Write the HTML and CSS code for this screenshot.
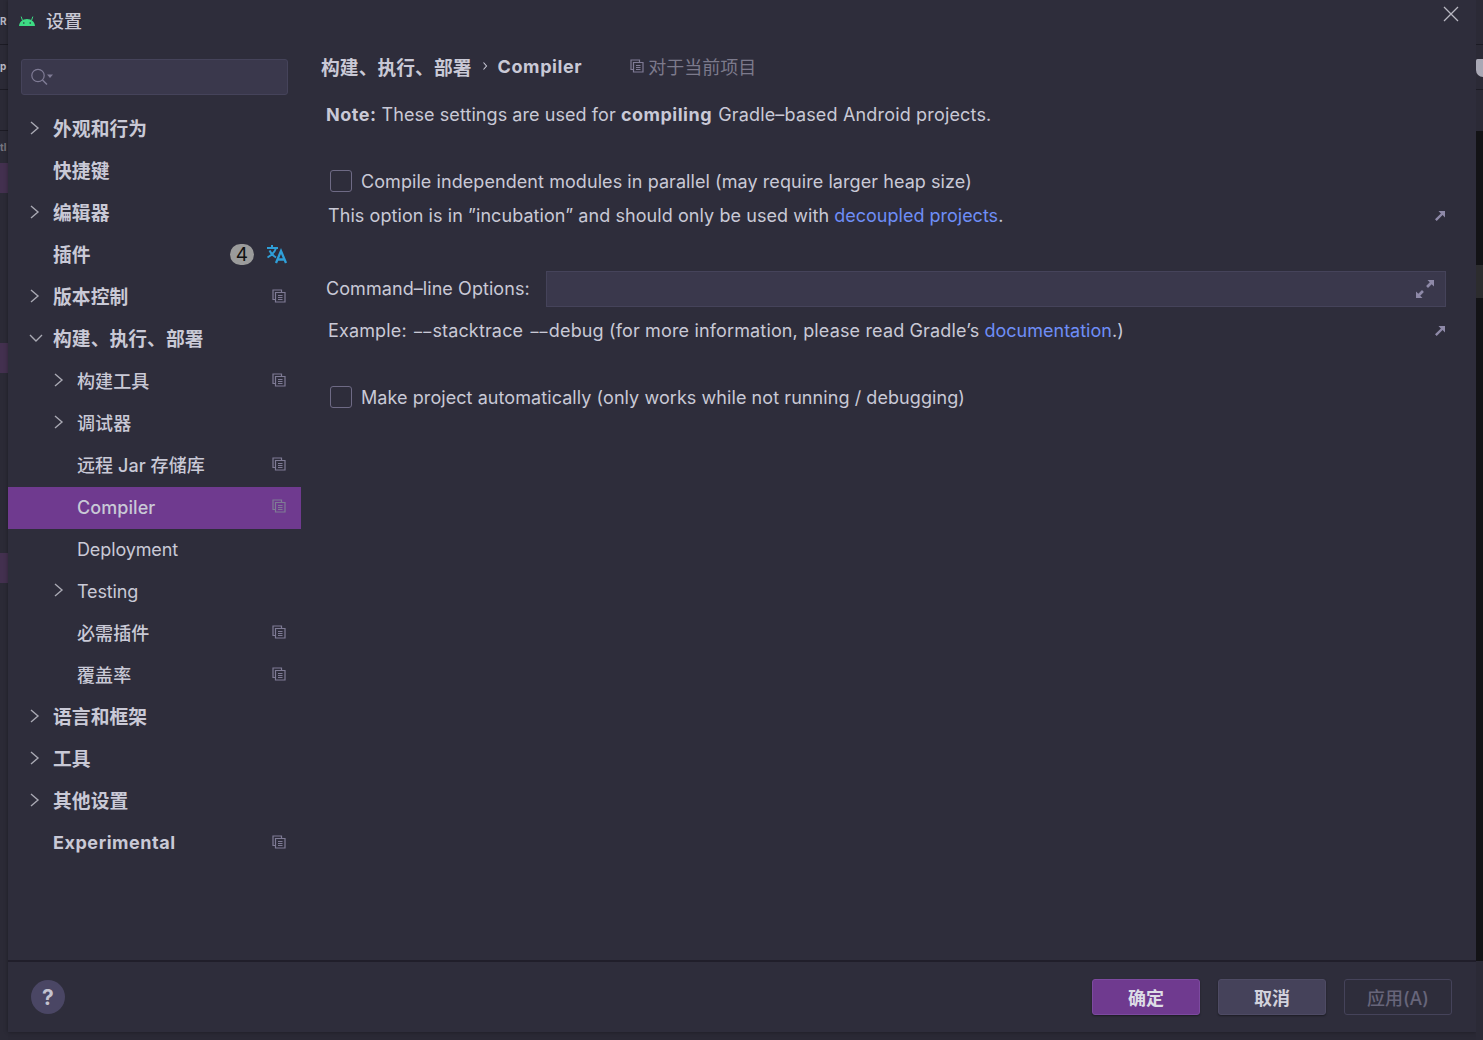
FILE: index.html
```html
<!DOCTYPE html>
<html lang="zh-CN">

<head>
  <meta charset="UTF-8" />
  <title>设置</title>
  <link rel="stylesheet" href="styles.css">
</head>

<body>
  <div class="ide-left">
    <div class="ide-cell h45"><span class="ide-text">R</span></div>
    <div class="ide-cell h45"><span class="ide-text">p</span></div>
    <div class="ide-cell h41"></div>
    <div class="ide-gap h32"><span class="ide-text dim">tl</span></div>
    <div class="ide-mark h30"></div>
    <div class="ide-gap h150"></div>
    <div class="ide-mark h30"></div>
    <div class="ide-gap h180"></div>
    <div class="ide-mark h30"></div>
  </div>

  <div class="dialog">
    <header class="titlebar">
      <svg class="android" width="16" height="10" viewBox="0 0 16 10">
        <path d="M0 10C.3 6 3.4 3 8 3s7.7 3 8 7z" fill="#3ddc84" />
        <path d="M3.5 4.5 2.2.6M12.5 4.5 13.800.6" stroke="#3ddc84" stroke-width="1" />
        <circle cx="4.800" cy="7" r=".8" fill="#2e2d3b" />
        <circle cx="11.200" cy="7" r=".8" fill="#2e2d3b" />
      </svg>
      <span class="title">设置</span>
      <svg class="close" width="16" height="16" viewBox="0 0 16 16">
        <path d="M1 1 15 15M15 1 1 15" stroke="#b9b8c2" stroke-width="1.300" />
      </svg>
    </header>

    <div class="main">
      <aside class="sidebar">
        <div class="search">
          <svg width="24" height="18" viewBox="0 0 24 18">
            <circle cx="8" cy="7.500" r="6.200" fill="none" stroke="#7f7b95" stroke-width="1.200" />
            <path d="M12.500 12 17 16.500" stroke="#7f7b95" stroke-width="1.500" />
            <path d="M17 6.500h6l-3 3.500z" fill="#7f7b95" />
          </svg>
        </div>
        <ul class="tree">
          <li class="row"><svg class="arrow" viewBox="0 0 10 14"><path d="M1 1l7 6-7 6" /></svg><span class="label strong">外观和行为</span></li>
          <li class="row"><span class="label strong">快捷键</span></li>
          <li class="row"><svg class="arrow" viewBox="0 0 10 14"><path d="M1 1l7 6-7 6" /></svg><span class="label strong">编辑器</span></li>
          <li class="row"><span class="label strong">插件</span><span class="badge">4</span>
            <svg class="translate" width="22" height="20" viewBox="0 0 22 20">
              <path d="M1 4h11M6 1v3M10 4C9 8 6 11 1.500 13.500M3.500 6.500C5 9.500 7.500 12 10 13.500" fill="none" stroke="#2f9fd8" stroke-width="2" />
              <path d="M10 19l5-12 5 12M12 15.500h6" fill="none" stroke="#2f9fd8" stroke-width="2.300" />
            </svg>
          </li>
          <li class="row"><svg class="arrow" viewBox="0 0 10 14"><path d="M1 1l7 6-7 6" /></svg><span class="label strong">版本控制</span><svg class="copy" viewBox="0 0 14 14"><path d="M3.500 10.500H1V1h8.500v2.500M3.500 3.500H13V13H3.500zM6 6.500h4.500M6 8.500h4.500M6 10.500h4.500" /></svg></li>
          <li class="row"><svg class="arrow open" viewBox="0 0 14 10"><path d="M1 2l6 6 6-6" /></svg><span class="label strong">构建、执行、部署</span></li>
          <li class="row sub"><svg class="arrow" viewBox="0 0 10 14"><path d="M1 1l7 6-7 6" /></svg><span class="label">构建工具</span><svg class="copy" viewBox="0 0 14 14"><path d="M3.500 10.500H1V1h8.500v2.500M3.500 3.500H13V13H3.500zM6 6.500h4.500M6 8.500h4.500M6 10.500h4.500" /></svg></li>
          <li class="row sub"><svg class="arrow" viewBox="0 0 10 14"><path d="M1 1l7 6-7 6" /></svg><span class="label">调试器</span></li>
          <li class="row sub"><span class="label">远程 Jar 存储库</span><svg class="copy" viewBox="0 0 14 14"><path d="M3.500 10.500H1V1h8.500v2.500M3.500 3.500H13V13H3.500zM6 6.500h4.500M6 8.500h4.500M6 10.500h4.500" /></svg></li>
          <li class="row sub selected"><span class="label latin">Compiler</span><svg class="copy" viewBox="0 0 14 14"><path d="M3.500 10.500H1V1h8.500v2.500M3.500 3.500H13V13H3.500zM6 6.500h4.500M6 8.500h4.500M6 10.500h4.500" /></svg></li>
          <li class="row sub"><span class="label latin">Deployment</span></li>
          <li class="row sub"><svg class="arrow" viewBox="0 0 10 14"><path d="M1 1l7 6-7 6" /></svg><span class="label latin">Testing</span></li>
          <li class="row sub"><span class="label">必需插件</span><svg class="copy" viewBox="0 0 14 14"><path d="M3.500 10.500H1V1h8.500v2.500M3.500 3.500H13V13H3.500zM6 6.500h4.500M6 8.500h4.500M6 10.500h4.500" /></svg></li>
          <li class="row sub"><span class="label">覆盖率</span><svg class="copy" viewBox="0 0 14 14"><path d="M3.500 10.500H1V1h8.500v2.500M3.500 3.500H13V13H3.500zM6 6.500h4.500M6 8.500h4.500M6 10.500h4.500" /></svg></li>
          <li class="row"><svg class="arrow" viewBox="0 0 10 14"><path d="M1 1l7 6-7 6" /></svg><span class="label strong">语言和框架</span></li>
          <li class="row"><svg class="arrow" viewBox="0 0 10 14"><path d="M1 1l7 6-7 6" /></svg><span class="label strong">工具</span></li>
          <li class="row"><svg class="arrow" viewBox="0 0 10 14"><path d="M1 1l7 6-7 6" /></svg><span class="label strong">其他设置</span></li>
          <li class="row"><span class="label strong latin">Experimental</span><svg class="copy" viewBox="0 0 14 14"><path d="M3.500 10.500H1V1h8.500v2.500M3.500 3.500H13V13H3.500zM6 6.500h4.500M6 8.500h4.500M6 10.500h4.500" /></svg></li>
        </ul>
      </aside>

      <section class="content">
        <div class="crumbs">
          <span class="crumb">构建、执行、部署</span>
          <svg class="crumb-sep" width="6" height="10" viewBox="0 0 6 10"><path d="M1.500 1.500 4.500 5l-3 3.500" /></svg>
          <span class="crumb latin">Compiler</span>
          <span class="scope">
            <svg class="copy-small" viewBox="0 0 14 14"><path d="M3.500 10.500H1V1h8.500v2.500M3.500 3.500H13V13H3.500zM6 6.500h4.500M6 8.500h4.500M6 10.500h4.500" /></svg>
            对于当前项目
          </span>
        </div>

        <p class="note"><b>Note:</b> These settings are used for <b>compiling</b> <span class="note-tail">Gradle–based Android projects.</span></p>

        <label class="check first"><span class="box"></span>Compile independent modules in parallel (may require larger heap size)</label>
        <div class="hint">
          <span>This option is in ”incubation” and should only be used with <a href="#">decoupled projects</a>.</span>
          <svg class="ext" viewBox="0 0 10 10"><path d="M3.500 0H10V6.500L7.600 4.100 1.700 10 0 8.300 5.900 2.400z" /></svg>
        </div>

        <div class="options">
          <span class="options-label">Command–line Options:</span>
          <div class="field">
            <svg width="20" height="20" viewBox="0 0 20 20">
              <path d="M12.500 1H19V7.500L16.700 5.200 13 8.900 11.100 7 14.800 3.300zM7.500 19H1V12.500L3.300 14.800 7 11.100 8.900 13 5.200 16.700z" fill="#8e89a8" />
            </svg>
          </div>
        </div>
        <div class="hint second">
          <span>Example: <span class="dash">––</span>stacktrace <span class="dash">––</span>debug (for more information, please read Gradle’s <a href="#">documentation</a>.)</span>
          <svg class="ext" viewBox="0 0 10 10"><path d="M3.500 0H10V6.500L7.600 4.100 1.700 10 0 8.300 5.900 2.400z" /></svg>
        </div>

        <label class="check third"><span class="box"></span>Make project automatically (only works while not running / debugging)</label>
      </section>
    </div>

    <footer class="footer">
      <button class="help" type="button">?</button>
      <div class="buttons">
        <button class="btn btn-ok" type="button">确定</button>
        <button class="btn btn-cancel" type="button">取消</button>
        <button class="btn btn-apply" type="button">应用(A)</button>
      </div>
    </footer>
  </div>

  <div class="ide-right">
    <div class="ide-cell h45"></div>
    <div class="ide-cell h45"><span class="shield"></span></div>
    <div class="ide-band h41"></div>
    <div class="ide-black h134"></div>
    <div class="ide-grey"></div>
    <div class="ide-black grow"></div>
  </div>
</body>

</html>
```

FILE: styles.css
```css
* {
  box-sizing: border-box;
}

html,
body {
  height: 100%;
}

body {
  margin: 0;
  display: flex;
  height: 1040px;
  overflow: hidden;
  background-color: #2a2935;
  font-family: 'Inter', 'Noto Sans CJK SC', sans-serif;
  font-size: 18px;
  letter-spacing: .07px;
  color: #c9c9d6;
}

/* bits of the IDE behind the dialog */
.ide-left,
.ide-right {
  display: flex;
  flex-direction: column;
  flex: none;
  overflow: hidden;
  background-color: #2b2a36;
}

.ide-left {
  width: 8px;
}

.ide-right {
  width: 7px;
}

.ide-cell {
  border-bottom: 1px solid #1c1b24;
  white-space: nowrap;
}

.h45 {
  height: 45px;
}

.h41 {
  height: 41px;
}

.h32 {
  height: 32px;
}

.h30 {
  height: 30px;
}

.h150 {
  height: 150px;
}

.h180 {
  height: 180px;
}

.h134 {
  height: 134px;
}

.ide-text {
  display: block;
  padding-top: 15px;
  font-size: 10px;
  font-weight: 700;
  letter-spacing: 0;
  color: #b8b8c4;
}

.ide-text.dim {
  padding-top: 10px;
  color: #77767f;
}

.ide-mark {
  background-color: #43304f;
}

.shield {
  display: block;
  width: 14px;
  height: 18px;
  margin-top: 14px;
  border-radius: 2px 2px 9px 9px;
  background-color: #a9a8b5;
}

.ide-band {
  background-color: #2b2a36;
}

.ide-black {
  background-color: #131316;
}

.ide-black.grow {
  height: 663px;
}

.ide-grey {
  height: 33px;
  background-color: #2c2c2e;
}

/* dialog */
.dialog {
  display: flex;
  flex-direction: column;
  flex: 1;
  height: 1032px;
  background-color: #2e2d3b;
  box-shadow: 0 0 4px rgba(0, 0, 0, 0.35);
}

.titlebar {
  display: flex;
  align-items: center;
  height: 44px;
  padding-left: 11px;
  padding-bottom: 4px;
}

.android {
  margin-top: 1px;
}

.title {
  margin-left: 11px;
  font-size: 18px;
  font-weight: 500;
  color: #c9c9d6;
}

.close {
  margin-left: auto;
  margin-right: 17px;
  margin-top: -13px;
}

.main {
  display: flex;
  flex: 1;
  min-height: 0;
}

.sidebar {
  width: 293px;
  flex: none;
}

.search {
  display: flex;
  align-items: center;
  width: 267px;
  height: 36px;
  margin: 15px 0 14px 13px;
  padding-left: 8px;
  border: 1px solid #45435a;
  border-radius: 3px;
  background-color: #3a384c;
}

.tree {
  margin: 0;
  padding: 0;
  list-style: none;
}

/* the text sits 2px above the middle of the row, the selected band shows it */
.row {
  position: relative;
  display: flex;
  align-items: center;
  height: 42px;
  padding: 0 15px 4px 45px;
}

.row.sub {
  padding-left: 69px;
}

.row.selected {
  background-color: #6f3a8f;
}

.label {
  font-size: 18px;
  font-weight: 500;
}

.label.strong {
  margin-bottom: 2px;
  font-size: 18.750px;
  font-weight: 700;
}

.label.latin {
  margin-top: 2px;
  font-size: 18px;
  font-weight: 400;
  letter-spacing: -.12px;
}

.selected .label.latin {
  font-weight: 500;
  letter-spacing: .07px;
}

.label.strong.latin {
  margin-top: 0;
  margin-bottom: 0;
  font-weight: 700;
  letter-spacing: .55px;
}

.arrow {
  position: absolute;
  left: 22px;
  top: 12px;
  width: 10px;
  height: 14px;
  fill: none;
  stroke: #a9a9b3;
  stroke-width: 1.400;
}

.arrow.open {
  left: 21px;
  top: 14px;
  width: 14px;
  height: 10px;
}

.sub .arrow {
  left: 46px;
}

.copy,
.copy-small {
  flex: none;
  width: 14px;
  height: 14px;
  fill: none;
  stroke: #7f7b95;
  stroke-width: 1.200;
}

.copy {
  margin-left: auto;
}

.badge {
  width: 24px;
  height: 21px;
  margin-left: auto;
  border-radius: 11px;
  background-color: #9b9b9b;
  color: #111;
  font-size: 19px;
  line-height: 21px;
  text-align: center;
}

.translate {
  margin-left: 12px;
  margin-right: -2px;
}

/* right panel */
.content {
  flex: 1;
  min-width: 0;
  padding: 0 30px 0 25px;
}

.crumbs {
  display: flex;
  align-items: center;
  height: 44px;
  margin-left: -5px;
}

.crumb {
  font-size: 18.750px;
  font-weight: 700;
}

.crumb.latin {
  font-size: 18px;
  letter-spacing: .6px;
}

.crumb-sep {
  margin: 0 10px;
  fill: none;
  stroke: #c9c9d6;
  stroke-width: 1.100;
}

.scope {
  display: flex;
  align-items: center;
  gap: 4px;
  margin-left: 48px;
  color: #7c7a8c;
  font-size: 18px;
  letter-spacing: 0;
}

.note {
  height: 24px;
  margin: 15px 0 0;
  line-height: 24px;
}

.note b {
  font-weight: 700;
  letter-spacing: .5px;
}

.note-tail {
  margin-left: 1px;
  letter-spacing: .17px;
}

.check {
  display: flex;
  align-items: center;
  height: 24px;
  margin-left: 4px;
}

.check.first {
  margin-top: 42px;
}

.check.third {
  margin-top: 43px;
}

.box {
  width: 22px;
  height: 22px;
  margin-right: 9px;
  border: 1px solid #6e6a85;
  border-radius: 3px;
  background-color: #2e2d3b;
}

.hint {
  display: flex;
  align-items: center;
  justify-content: space-between;
  height: 24px;
  margin: 10px 0 0 2px;
  padding-right: 1px;
}

.hint.second {
  margin-top: 11px;
  letter-spacing: .15px;
}

.hint a {
  color: #6e8ef7;
  text-decoration: none;
  letter-spacing: 0;
}

.dash {
  margin-left: 2px;
  font-size: 16px;
  letter-spacing: 1.200px;
}

.ext {
  width: 10px;
  height: 10px;
  margin-top: 1px;
  fill: #8e89a8;
}

.options {
  display: flex;
  align-items: center;
  height: 36px;
  margin-top: 44px;
}

.options-label {
  margin-bottom: 2px;
}

.field {
  display: flex;
  align-items: center;
  justify-content: flex-end;
  flex: 1;
  height: 36px;
  margin-left: 16px;
  padding-right: 10px;
  border: 1px solid #45435a;
  background-color: #3a384c;
}

/* bottom bar */
.footer {
  display: flex;
  align-items: center;
  justify-content: space-between;
  height: 72px;
  padding: 0 24px 0 23px;
  border-top: 2px solid #201e2a;
}

.help {
  width: 34px;
  height: 34px;
  padding: 0;
  border: 0;
  border-radius: 50%;
  background-color: #4a4664;
  color: #c4c3d0;
  font-family: inherit;
  font-size: 21px;
  font-weight: 700;
}

.buttons {
  display: flex;
  gap: 18px;
}

.btn {
  width: 108px;
  height: 36px;
  padding: 0;
  border: 1px solid;
  border-radius: 3px;
  font-family: inherit;
  font-size: 18px;
  font-weight: 700;
}

.btn-ok {
  border-color: #7d4aa0;
  background-color: #6f3a8f;
  color: #dddde6;
  box-shadow: 0 1px 2px rgba(0, 0, 0, 0.4);
}

.btn-cancel {
  border-color: #4e4b64;
  background-color: #45425a;
  color: #d2d2dc;
  box-shadow: 0 1px 2px rgba(0, 0, 0, 0.4);
}

.btn-apply {
  border-color: #45435a;
  background-color: transparent;
  color: #67657a;
  font-weight: 500;
}
```
